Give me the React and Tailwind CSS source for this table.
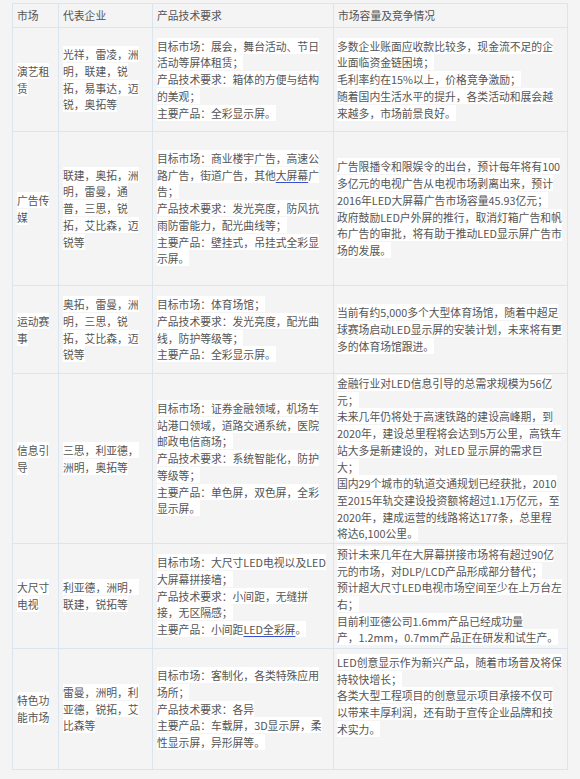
import React from 'react'

const U = ({ children }) => (
  <span className="underline decoration-[#3a4fd0] underline-offset-2">{children}</span>
)

const rows = [
  {
    h: 'h-[104px]',
    market: ['演艺租', '赁'],
    firms: ['光祥，雷凌，洲', '明，联建，锐', '拓，易事达，迈', '锐，奥拓等'],
    tech: ['目标市场：展会，舞台活动、节日', '活动等屏体租赁；', '产品技术要求：箱体的方便与结构', '的美观；', '主要产品：全彩显示屏。'],
    size: ['多数企业账面应收款比较多，现金流不足的企', '业面临资金链困境；', '毛利率约在15%以上，价格竞争激励；', '随着国内生活水平的提升，各类活动和展会越', '来越多，市场前景良好。'],
  },
  {
    h: 'h-[154px]',
    market: ['广告传', '媒'],
    firms: ['联建，奥拓，洲', '明，雷曼，通', '普，三思，锐', '拓，艾比森，迈', '锐等'],
    tech: [
      '目标市场：商业楼宇广告，高速公',
      <>路广告，街道广告，其他<U>大屏幕</U>广</>,
      '告；',
      '产品技术要求：发光亮度，防风抗',
      '雨防雷能力，配光曲线等；',
      '主要产品：壁挂式，吊挂式全彩显',
      '示屏。',
    ],
    size: ['广告限播令和限娱令的出台，预计每年将有100', '多亿元的电视广告从电视市场剥离出来，预计', '2016年LED大屏幕广告市场容量45.93亿元；', '政府鼓励LED户外屏的推行，取消灯箱广告和帆', '布广告的审批，将有助于推动LED显示屏广告市', '场的发展。'],
  },
  {
    h: 'h-[88px]',
    market: ['运动赛', '事'],
    firms: ['奥拓，雷曼，洲', '明，三思，锐', '拓，艾比森，迈', '锐等'],
    tech: ['目标市场：体育场馆；', '产品技术要求：发光亮度，配光曲', '线，防护等级等；', '主要产品：全彩显示屏。'],
    size: ['当前有约5,000多个大型体育场馆，随着中超足', '球赛场启动LED显示屏的安装计划，未来将有更', '多的体育场馆跟进。'],
  },
  {
    h: 'h-[170px]',
    market: ['信息引', '导'],
    firms: ['三思，利亚德，', '洲明，奥拓等'],
    tech: ['目标市场：证券金融领域，机场车', '站港口领域，道路交通系统，医院', '邮政电信商场；', '产品技术要求：系统智能化，防护', '等级等；', '主要产品：单色屏，双色屏，全彩', '显示屏。'],
    size: ['金融行业对LED信息引导的总需求规模为56亿', '元；', '未来几年仍将处于高速铁路的建设高峰期，到', '2020年，建设总里程将会达到5万公里，高铁车', '站大多是新建设的，对LED 显示屏的需求巨', '大；', '国内29个城市的轨道交通规划已经获批，2010', '至2015年轨交建设投资额将超过1.1万亿元，至', '2020年，建成运营的线路将达177条，总里程', '将达6,100公里。'],
  },
  {
    h: 'h-[105px]',
    market: ['大尺寸', '电视'],
    firms: ['利亚德，洲明，', '联建，锐拓等'],
    tech: [
      '目标市场：大尺寸LED电视以及LED',
      '大屏幕拼接墙；',
      '产品技术要求：小间距，无缝拼',
      '接，无区隔感；',
      <>主要产品：小间距<U>LED全彩屏</U>。</>,
    ],
    size: ['预计未来几年在大屏幕拼接市场将有超过90亿', '元的市场，对DLP/LCD产品形成部分替代；', '预计超大尺寸LED电视市场空间至少在上万台左', '右；', '目前利亚德公司1.6mm产品已经成功量', '产，1.2mm，0.7mm产品正在研发和试生产。'],
  },
  {
    h: 'h-[121px]',
    top: true,
    market: ['特色功', '能市场'],
    firms: ['雷曼，洲明，利', '亚德，锐拓，艾', '比森等'],
    tech: ['目标市场：客制化，各类特殊应用', '场所；', '产品技术要求：各异', '主要产品：车载屏，3D显示屏，柔', '性显示屏，异形屏等。'],
    size: ['LED创意显示作为新兴产品，随着市场普及将保', '持较快增长；', '各类大型工程项目的创意显示项目承接不仅可', '以带来丰厚利润，还有助于宣传企业品牌和技', '术实力。'],
  },
]

function Lines({ lines }) {
  return lines.map((line, i) => (
    <div key={i} className="whitespace-nowrap">
      <span className="bg-white">{line}</span>
    </div>
  ))
}

export default function App() {
  return (
    <div
      className="min-h-screen bg-[#f4f4f4] pt-[3px] pl-[12px] text-[#555555] text-[10.8px] leading-[16.7px]"
      style={{ fontFamily: '"Noto Sans CJK SC", "Noto Sans", sans-serif' }}
    >
      <table className="table-fixed border-collapse w-[555px]">
        <colgroup>
          <col className="w-[46px]" />
          <col className="w-[94px]" />
          <col className="w-[181px]" />
          <col className="w-[234px]" />
        </colgroup>
        <thead>
          <tr className="h-[24px]">
            {['市场', '代表企业', '产品技术要求', '市场容量及竞争情况'].map(t => (
              <th key={t} className="border border-[#dbe5f0] px-[4px] text-left font-normal align-middle">
                {t}
              </th>
            ))}
          </tr>
        </thead>
        <tbody>
          {rows.map((r, i) => (
            <tr key={i} className={r.h}>
              <td className="border border-[#dbe5f0] px-[4px] align-middle">
                <Lines lines={r.market} />
              </td>
              <td className="border border-[#dbe5f0] px-[4px] align-middle">
                <Lines lines={r.firms} />
              </td>
              <td className="border border-[#dbe5f0] px-[4px] align-middle">
                <Lines lines={r.tech} />
              </td>
              <td className={`border border-[#dbe5f0] px-[3px] ${r.top ? 'align-top pt-[5px]' : 'align-middle'}`}>
                <Lines lines={r.size} />
              </td>
            </tr>
          ))}
        </tbody>
      </table>
    </div>
  )
}
